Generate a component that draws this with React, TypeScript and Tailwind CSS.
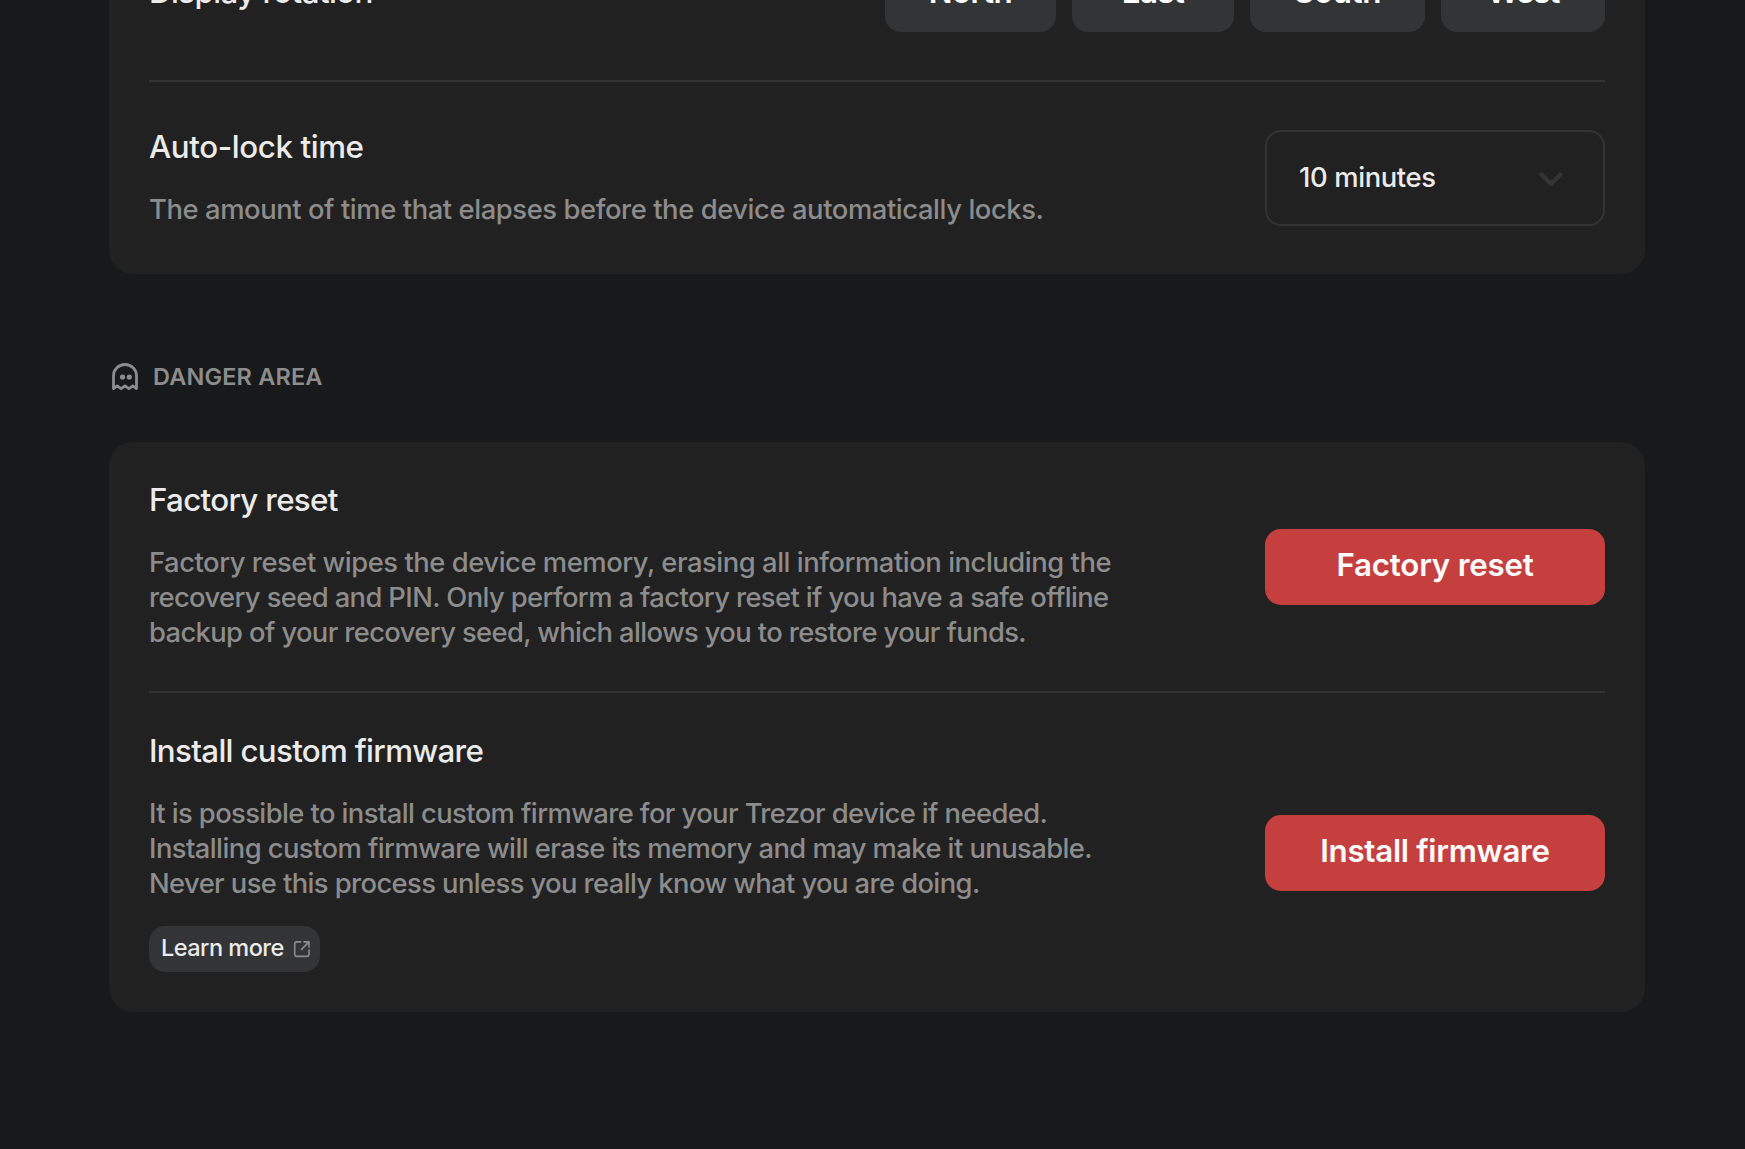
import type { ReactNode } from 'react';

function GhostIcon() {
  return (
    <svg width="30" height="30" viewBox="0 0 30 30" fill="none" className="ml-px shrink-0">
      <path
        d="M3.5 26.6V13.6a11.5 11.1 0 0 1 23 0V26.6L22.8 23.9 18.9 26.6 15 23.9 11.1 26.6 7.2 23.9Z"
        stroke="#8c8c8c"
        strokeWidth="2.8"
        strokeLinejoin="round"
      />
      <circle cx="12.5" cy="15" r="2.6" fill="#8c8c8c" />
      <circle cx="19.3" cy="15" r="2.6" fill="#8c8c8c" />
    </svg>
  );
}

function ExternalLinkIcon() {
  return (
    <svg width="18" height="18" viewBox="0 0 18 18" fill="none" stroke="#8c8c8c" strokeWidth="1.6" strokeLinecap="round" strokeLinejoin="round">
      <path d="M7.6 1.9H4A2.3 2.3 0 0 0 1.7 4.2v9.9A2.3 2.3 0 0 0 4 16.4h9.7a2.3 2.3 0 0 0 2.3-2.3v-4" />
      <path d="M11 1.9h5v5M16 1.9 8.6 9.4" />
    </svg>
  );
}

function Line({ className, children }: { className: string; children: ReactNode }) {
  return <span className={`block whitespace-nowrap ${className}`}>{children}</span>;
}

function Title({ className, children }: { className: string; children: ReactNode }) {
  return <h3 className={`text-[31.3px] leading-10 font-medium whitespace-nowrap text-[#ebebeb] ${className}`}>{children}</h3>;
}

function Description({ children }: { children: ReactNode }) {
  return <p className="mt-[25px] text-[27.36px] leading-[35px] font-medium text-[#8c8c8c]">{children}</p>;
}

function DangerButton({ className, children }: { className: string; children: ReactNode }) {
  return (
    <button className={`h-[76px] w-[340px] shrink-0 rounded-2xl bg-[#c63f3f] pb-1 text-[31.3px] leading-10 font-semibold whitespace-nowrap text-[#fafafa] ${className}`}>
      {children}
    </button>
  );
}

function RotationButton({ className, children }: { className: string; children: ReactNode }) {
  return (
    <button className={`h-[76px] rounded-2xl bg-[#333436] pb-1 text-[31.3px] leading-10 font-semibold text-white ${className}`}>
      {children}
    </button>
  );
}

export default function App() {
  return (
    <div className="flex h-[1149px] w-[1745px] flex-col overflow-hidden bg-[#18191a] pr-[100px] pl-[109px] font-[Inter,sans-serif]">
      <section className="-mt-[92px] flex h-[366px] shrink-0 flex-col rounded-3xl bg-[#212121] px-10">
        <div className="flex h-[174px] shrink-0 items-end justify-between border-b-2 border-[#333333] pb-12">
          <Title className="mb-5 tracking-[-0.6px]">Display rotation</Title>
          <div className="flex gap-4">
            <RotationButton className="w-[171px] tracking-[-0.5px]">North</RotationButton>
            <RotationButton className="w-[162px] tracking-[-0.7px]">East</RotationButton>
            <RotationButton className="w-[175px] tracking-[-0.4px]">South</RotationButton>
            <RotationButton className="w-[164px] tracking-[-1.3px]">West</RotationButton>
          </div>
        </div>
        <div className="flex h-48 shrink-0 items-center justify-between">
          <div className="h-full pt-[45px]">
            <Title className="tracking-[-0.4px]">Auto-lock time</Title>
            <Description>
              <Line className="tracking-[-0.416px]">The amount of time that elapses before the device automatically locks.</Line>
            </Description>
          </div>
          <div className="flex h-24 w-[340px] items-center justify-between rounded-2xl border-2 border-[#333333] pr-[39px] pl-8">
            <span className="pb-0.5 text-[27.36px] leading-[35px] font-medium tracking-[-0.37px] text-[#ebebeb]">10 minutes</span>
            <svg width="26" height="16" viewBox="0 0 26 16" fill="none" stroke="#333436" strokeWidth="4.4" strokeLinecap="round" strokeLinejoin="round" className="mt-0.5">
              <path d="m3.5 3.5 9.5 9.3 9.5-9.3" />
            </svg>
          </div>
        </div>
      </section>

      <div className="mt-[86px] flex h-[34px] shrink-0 items-center">
        <GhostIcon />
        <h2 className="ml-[13px] text-[23.5px] leading-[34px] font-semibold tracking-[0.16px] text-[#8c8c8c]">DANGER AREA</h2>
      </div>

      <section className="mt-12 flex shrink-0 flex-col rounded-3xl bg-[#212121] px-10">
        <div className="flex items-center justify-between border-b-2 border-[#333333]">
          <div className="pt-[38px] pb-[41px]">
            <Title className="tracking-[-0.68px]">Factory reset</Title>
            <Description>
              <Line className="tracking-[-0.456px]">Factory reset wipes the device memory, erasing all information including the</Line>
              <Line className="tracking-[-0.62px]">recovery seed and PIN. Only perform a factory reset if you have a safe offline</Line>
              <Line className="tracking-[-0.628px]">backup of your recovery seed, which allows you to restore your funds.</Line>
            </Description>
          </div>
          <DangerButton className="tracking-[-0.223px]">Factory reset</DangerButton>
        </div>
        <div className="flex items-center justify-between">
          <div className="pt-[38px] pb-10">
            <Title className="tracking-[-0.68px]">Install custom firmware</Title>
            <Description>
              <Line className="tracking-[-0.592px]">It is possible to install custom firmware for your Trezor device if needed.</Line>
              <Line className="tracking-[-0.57px]">Installing custom firmware will erase its memory and may make it unusable.</Line>
              <Line className="tracking-[-0.598px]">Never use this process unless you really know what you are doing.</Line>
            </Description>
            <a className="mt-[25px] flex h-[46px] w-[171px] items-center justify-between rounded-2xl bg-[#333436] pr-[9px] pl-3">
              <span className="pb-0.5 text-[23.5px] leading-8 font-medium tracking-[-0.52px] whitespace-nowrap text-[#ebebeb]">Learn more</span>
              <ExternalLinkIcon />
            </a>
          </div>
          <DangerButton className="tracking-[-0.299px]">Install firmware</DangerButton>
        </div>
      </section>
    </div>
  );
}
